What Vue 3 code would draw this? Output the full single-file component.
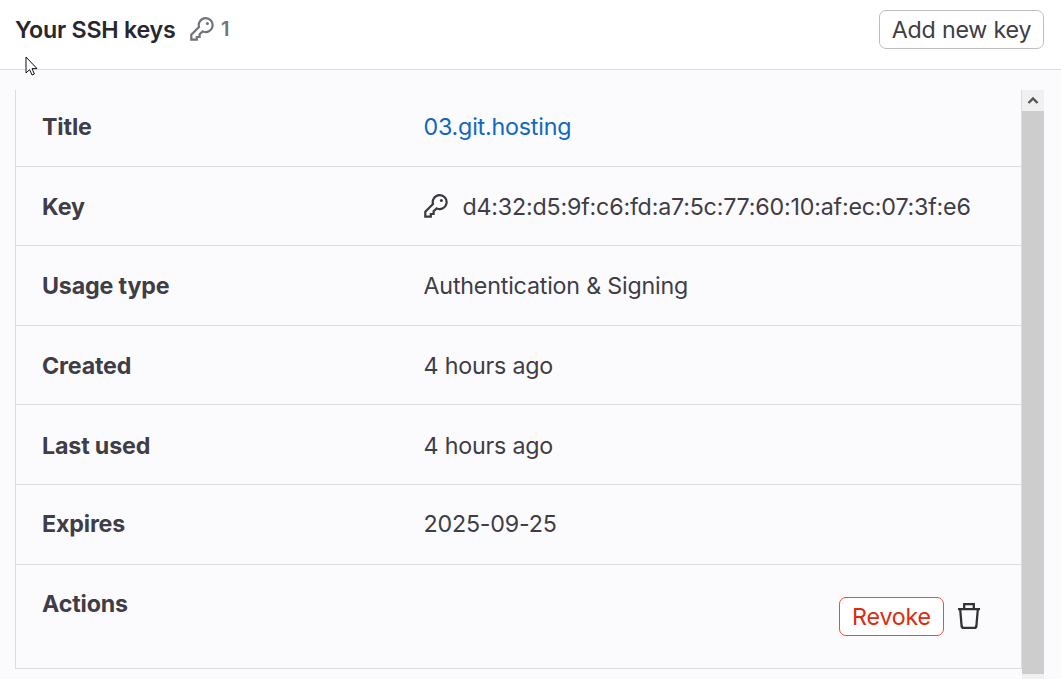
<script setup>
const keyPath =
  'M9 10L1.3 17.8V22.6H6.8V20H9.6V17.2L12.8 14.4A6.95 6.95 0 1 0 9 10Z'
const rows = [
  { label: 'Title', value: '03.git.hosting', kind: 'link' },
  { label: 'Key', value: 'd4:32:d5:9f:c6:fd:a7:5c:77:60:10:af:ec:07:3f:e6', kind: 'fingerprint' },
  { label: 'Usage type', value: 'Authentication & Signing' },
  { label: 'Created', value: '4 hours ago', kind: 'time' },
  { label: 'Last used', value: '4 hours ago', kind: 'time' },
  { label: 'Expires', value: '2025-09-25', kind: 'date' },
  { label: 'Actions', kind: 'actions' },
]
</script>

<template>
  <div class="page">
    <header class="head">
      <h2>Your SSH keys</h2>
      <svg class="key" viewBox="0 0 24 24"><path :d="keyPath" /><circle cx="17.4" cy="6.5" r="1.5" /></svg>
      <span class="count">1</span>
      <button class="btn add">Add new key</button>
    </header>
    <main class="body">
      <div class="table">
        <div v-for="r in rows" :key="r.label" class="row" :class="r.kind">
          <span class="label">{{ r.label }}</span>
          <div v-if="r.kind === 'actions'" class="acts">
            <button class="btn revoke">Revoke</button>
            <svg class="trash" viewBox="0 0 24 28">
              <path d="M1 7.2H23M7.2 7V2.2H16.8V7M3.2 7.5L4.6 24Q4.8 25.8 6.5 25.8H17.5Q19.2 25.8 19.4 24L20.8 7.5" />
            </svg>
          </div>
          <a v-else-if="r.kind === 'link'" class="value">{{ r.value }}</a>
          <span v-else class="value">
            <svg v-if="r.kind === 'fingerprint'" class="key" viewBox="0 0 24 24"><path :d="keyPath" /><circle cx="17.4" cy="6.5" r="1.5" /></svg>
            <span>{{ r.value }}</span>
          </span>
        </div>
      </div>
      <div class="scroll">
        <div class="up"><svg viewBox="0 0 12 8"><path d="M1.5 7L6 2.5L10.5 7" /></svg></div>
        <div class="thumb"></div>
      </div>
    </main>
    <svg class="cursor" viewBox="0 0 13 20">
      <path d="M1 1V17L4.6 13.6L7 19L9.4 18L7 12.6H12Z" />
    </svg>
  </div>
</template>

<style>
body { margin: 0; overflow: hidden; }
</style>
<style scoped>
* { box-sizing: border-box; }
.page { position: relative; width: 1061px; height: 679px; overflow: hidden; background: #fbfbfd; color: #3f3d45; font: 400 23.25px/30px Inter, "Liberation Sans", sans-serif; letter-spacing: -0.2px; display: flex; flex-direction: column; }
.head { height: 70px; flex: none; background: #fff; border-bottom: 1.5px solid #dcdcde; display: flex; align-items: flex-start; padding: 10px 17px 0 15px; }
h2 { width: 161px; margin: 5px 0 0; font-size: 23.25px; line-height: 30px; font-weight: 630; letter-spacing: -0.25px; color: #28272d; white-space: nowrap; }
.key { width: 24px; height: 24px; fill: none; stroke: #3a383f; stroke-width: 2.2; flex: none; }
.key circle { fill: #3a383f; stroke: none; }
.head .key { margin: 7px 0 0 14px; stroke: #737278; }
.head .key circle { fill: #737278; }
.count { margin: 4px 0 0 7px; font-size: 20px; font-weight: 600; color: #737278; }
.btn { font: inherit; letter-spacing: inherit; border-radius: 7px; background: #fff; height: 39px; padding: 0; border: 1.5px solid #bfbfc3; color: #3f3d45; }
.add { width: 165px; margin-left: auto; }
.body { flex: 1; display: flex; padding: 20px 17px 0 15px; }
.table { width: 1007px; height: 579px; border: solid #dcdcde; border-width: 0 1px 1px; display: grid; grid-template-rows: 77px 79px 80px 79px 80px 80px 1fr; }
.row { display: grid; grid-template-columns: 381.5px 1fr; padding: 0 26px; border-bottom: 1px solid #dcdcde; align-items: center; }
.row.link { padding-bottom: 2px; }
.row.fingerprint, .row.time { padding-top: 2px; }
.row.date { padding-bottom: 2px; }
.row:last-child { border-bottom: 0; align-items: start; padding-right: 39px; padding-top: 24px; }
.label { font-weight: 650; letter-spacing: -0.17px; }
.value { display: flex; align-items: center; white-space: nowrap; }
a.value { color: #1068bf; }
.value .key { margin: 0 14.5px 0 0.5px; position: relative; top: -1px; }
.acts { display: flex; justify-content: flex-end; align-items: center; gap: 14px; padding-top: 8px; }
.revoke { width: 105px; color: #dd2b0e; border-color: #e2513a; }
.trash { width: 24px; height: 28px; fill: none; stroke: #333238; stroke-width: 2.3; margin: 0 1px 1px -1px; }
.scroll { width: 22px; background: #f0f0f0; display: flex; flex-direction: column; }
.up { height: 21px; display: flex; align-items: center; justify-content: center; padding-bottom: 2px; }
.up svg { width: 12px; height: 8px; fill: none; stroke: #555; stroke-width: 2.4; }
.thumb { height: 563px; background: #cdcdcd; }
.cursor { position: absolute; left: 25px; top: 56px; width: 13px; height: 20px; fill: #fff; stroke: #111; stroke-width: 1; }
</style>
